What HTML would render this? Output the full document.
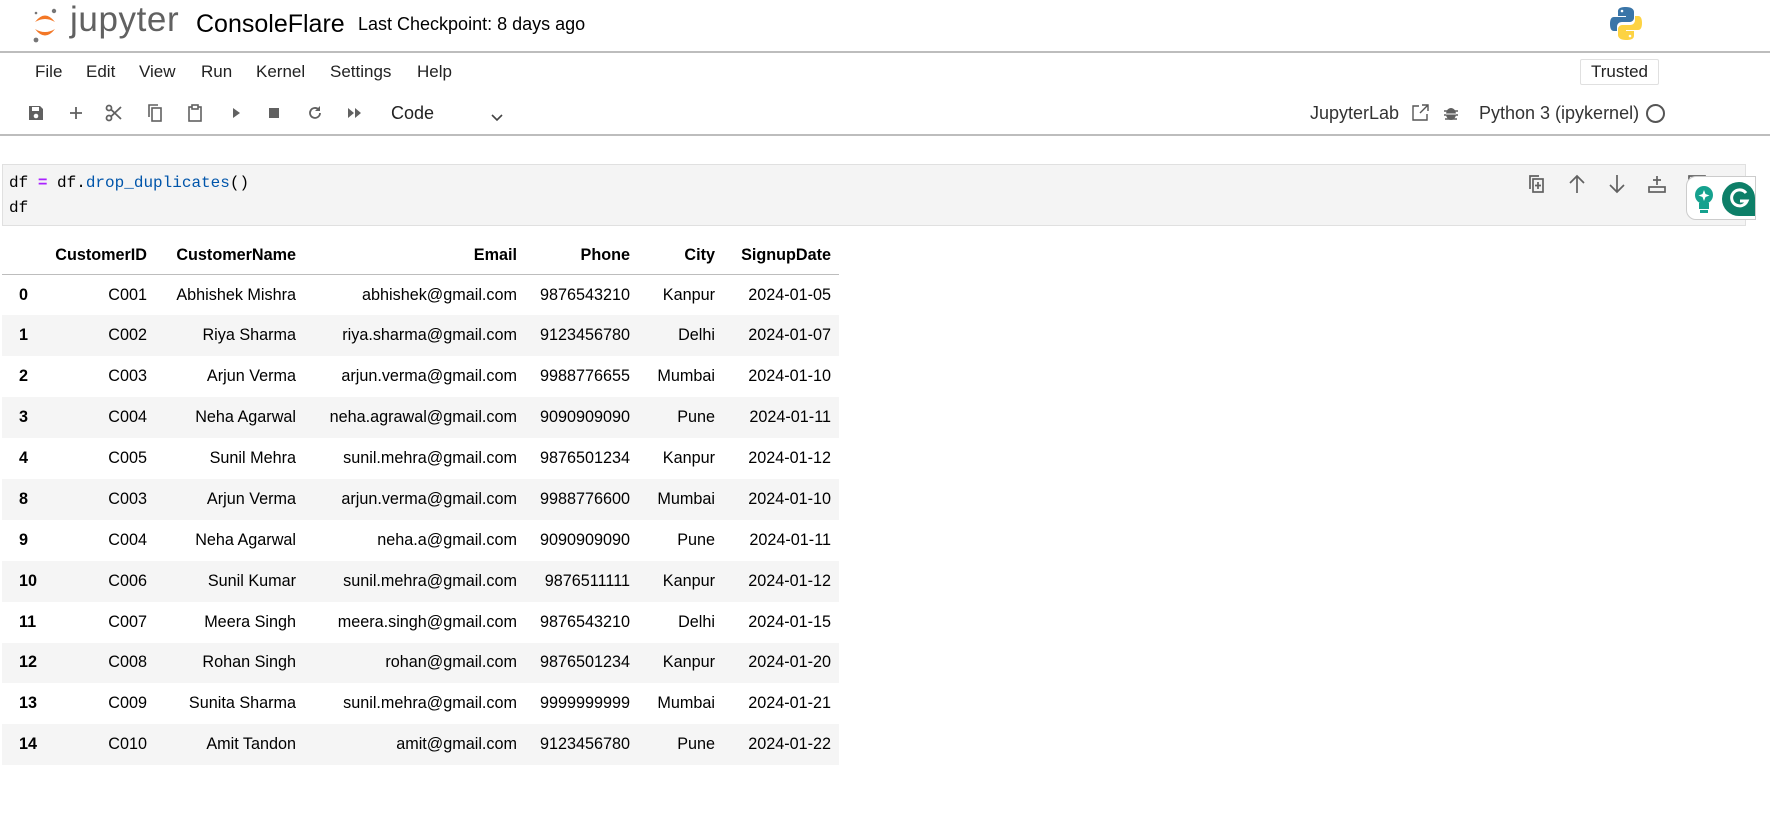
<!DOCTYPE html>
<html><head><meta charset="utf-8"><style>
*{margin:0;padding:0;box-sizing:border-box}
body{width:1770px;height:826px;background:#fff;font-family:"Liberation Sans",sans-serif;color:#000;position:relative;overflow:hidden}
.abs{position:absolute}
.menu span{position:absolute;top:62px;font-size:17px;color:#222}
.tb{position:absolute;top:103px;width:20px;height:20px}
table{position:absolute;left:2px;top:236px;border-collapse:collapse;table-layout:fixed;font-size:16.2px;width:837px}
td,th{height:40.9px;text-align:right;padding-right:8px;white-space:nowrap;overflow:hidden}
th{font-weight:bold}
thead th{height:38.5px;border-bottom:1.5px solid #bdbdbd}
tbody tr:nth-child(even){background:#f5f5f5}
tbody th{text-align:left;padding-left:17px}
</style></head><body>
<!-- header -->
<svg class="abs" style="left:32px;top:6px" width="26" height="38" viewBox="0 0 26 38">
<path d="M3 16 Q13 3 23 16 Q13 10 3 16Z" fill="#f37726"/>
<path d="M3 23 Q13 36 23 23 Q13 29 3 23Z" fill="#f37726"/>
<circle cx="22" cy="5" r="2.2" fill="#767677"/><circle cx="4" cy="34" r="2.4" fill="#767677"/><circle cx="4" cy="7" r="1.3" fill="#767677"/>
</svg>
<div class="abs" style="left:70px;top:0px;font-size:35px;color:#616161;letter-spacing:0.6px">jupyter</div>
<div class="abs" style="left:196px;top:10px;font-size:25px">ConsoleFlare</div>
<div class="abs" style="left:358px;top:14px;font-size:18px">Last Checkpoint: 8 days ago</div>
<svg class="abs" style="left:1609px;top:6px" width="34" height="35" viewBox="0 0 34 35">
<path d="M17 1C9 1 9 4 9 6v4h8v1H5C2 11 1 14 1 18s1 7 4 7h3v-4c0-3 2-5 5-5h8c2 0 4-2 4-4V6c0-3-3-5-8-5z" fill="#3a75a8"/>
<path d="M17 34c8 0 8-3 8-5v-4h-8v-1h12c3 0 4-3 4-7s-1-7-4-7h-3v4c0 3-2 5-5 5h-8c-2 0-4 2-4 4v6c0 3 3 5 8 5z" fill="#fdd343"/>
<circle cx="13" cy="5" r="1.3" fill="#fff"/><circle cx="21" cy="30" r="1.3" fill="#fff"/>
</svg>
<div class="abs" style="left:0;top:51px;width:1770px;height:1.5px;background:#bdbdbd"></div>
<div class="menu"><span style="left:35px">File</span><span style="left:86px">Edit</span><span style="left:139px">View</span><span style="left:201px">Run</span><span style="left:256px">Kernel</span><span style="left:330px">Settings</span><span style="left:417px">Help</span></div>
<div class="abs" style="left:1580px;top:59px;width:79px;height:26px;border:1px solid #e0e0e0;border-radius:2px;font-size:17px;text-align:center;line-height:24px;color:#222">Trusted</div>
<!-- toolbar -->
<svg class="tb" style="left:26px" viewBox="0 0 20 20"><path d="M3 3h11l3 3v11H3z" fill="#616161"/><rect x="6" y="4" width="7" height="4" fill="#fff"/><circle cx="10" cy="13" r="2.3" fill="#fff"/></svg>
<svg class="tb" style="left:66px" viewBox="0 0 20 20"><path d="M10 4v12M4 10h12" stroke="#616161" stroke-width="1.8"/></svg>
<svg class="tb" style="left:104px" viewBox="0 0 20 20"><g stroke="#616161" stroke-width="1.8" fill="none"><circle cx="5" cy="5" r="2.5"/><circle cx="5" cy="15" r="2.5"/><path d="M7 6.5L17 16M7 13.5L17 4"/></g></svg>
<svg class="tb" style="left:145px" viewBox="0 0 20 20"><g stroke="#616161" stroke-width="1.6" fill="none"><path d="M4 14V2h9"/><rect x="7" y="5" width="9" height="13"/></g></svg>
<svg class="tb" style="left:185px" viewBox="0 0 20 20"><g stroke="#616161" stroke-width="1.6" fill="none"><rect x="4" y="4" width="12" height="14"/><rect x="7" y="2" width="6" height="4" fill="#fff"/></g></svg>
<svg class="tb" style="left:226px" viewBox="0 0 20 20"><path d="M7 5l7 5-7 5z" fill="#616161"/></svg>
<svg class="tb" style="left:264px" viewBox="0 0 20 20"><rect x="5" y="5" width="10" height="10" fill="#616161"/></svg>
<svg class="tb" style="left:305px" viewBox="0 0 20 20"><path d="M15 10a5 5 0 1 1-1.5-3.6" stroke="#616161" stroke-width="1.8" fill="none"/><path d="M15 3v5h-5z" fill="#616161"/></svg>
<svg class="tb" style="left:345px" viewBox="0 0 20 20"><path d="M3 5l6 5-6 5zM10 5l6 5-6 5z" fill="#616161"/></svg>
<div class="abs" style="left:391px;top:103px;font-size:18px;color:#222">Code</div>
<svg class="abs" style="left:490px;top:112px" width="14" height="10" viewBox="0 0 14 10"><path d="M2 3l5 5 5-5" stroke="#444" stroke-width="1.6" fill="none"/></svg>
<div class="abs" style="left:1310px;top:103px;font-size:18px;color:#333">JupyterLab</div>
<svg class="abs" style="left:1411px;top:103px" width="19" height="19" viewBox="0 0 19 19"><g stroke="#555" stroke-width="1.4" fill="none"><path d="M8 3H2v14h14v-6"/><path d="M11 2h6v6M17 2l-8 8"/></g></svg>
<svg class="abs" style="left:1443px;top:105px" width="16" height="16" viewBox="0 0 16 16"><ellipse cx="8" cy="9" rx="5" ry="6" fill="#616161"/><path d="M1 6h14M1 10h14M2 14h12" stroke="#616161" stroke-width="1.5"/><path d="M3 9h10" stroke="#fff" stroke-width="1"/></svg>
<div class="abs" style="left:1479px;top:103px;font-size:18px;color:#333">Python 3 (ipykernel)</div>
<div class="abs" style="left:1646px;top:104px;width:19px;height:19px;border:2px solid #555;border-radius:50%"></div>
<div class="abs" style="left:0;top:134px;width:1770px;height:1.5px;background:#bdbdbd"></div>
<!-- cell -->
<div class="abs" style="left:2px;top:164px;width:1744px;height:62px;background:#f4f4f4;border:1px solid #e0e0e0"></div>
<div class="abs" style="left:9px;top:171px;font-family:'Liberation Mono',monospace;font-size:16px;line-height:25px;color:#000">df <b style="color:#aa22ff">=</b> df.<span style="color:#0055aa">drop_duplicates</span>()<br>df</div>
<svg class="abs" style="left:1527px;top:173px;width:220px;height:22px" viewBox="0 0 220 22">
<g stroke="#616161" stroke-width="1.7" fill="none">
<path d="M3 16V3h9"/><rect x="6" y="6" width="10" height="13"/><path d="M11 9v7M8 12.5h6"/>
<path d="M50 20V3M43 10l7-7 7 7"/>
<path d="M90 2v17M83 12l7 7 7-7"/>
<path d="M130 3v9M126 7h8"/><rect x="122" y="14" width="16" height="5"/>
<rect x="162" y="3" width="16" height="5"/><path d="M170 11v9M166 15h8"/>
</g>
<path d="M202 4h14v3h-14zM203 8h12v13h-12z" fill="#616161"/>
</svg>
<div class="abs" style="left:1686px;top:176px;width:70px;height:44px;background:#fff;border:1px solid #ccc;border-radius:10px 0 0 10px"></div>
<svg class="abs" style="left:1693px;top:185px" width="22" height="30" viewBox="0 0 22 30"><circle cx="11" cy="10" r="9" fill="#15a18e"/><rect x="6" y="18" width="10" height="6" fill="#15a18e"/><rect x="7" y="25" width="8" height="3" fill="#15a18e"/><path d="M11 5l1.5 4 4 1.5-4 1.5-1.5 4-1.5-4-4-1.5 4-1.5z" fill="#fff"/></svg>
<svg class="abs" style="left:1722px;top:181px" width="34" height="36" viewBox="0 0 34 36"><path d="M17 1a16 16 0 0 1 16 16v18H17A16 16 0 0 1 17 1z" fill="#0d7f68"/><path d="M24 12a8 8 0 1 0 1 8h-7" stroke="#fff" stroke-width="3" fill="none"/></svg>
<!-- table -->
<table>
<colgroup><col style="width:38px"><col style="width:115px"><col style="width:149px"><col style="width:221px"><col style="width:113px"><col style="width:85px"><col style="width:116px"></colgroup>
<thead><tr><th></th><th>CustomerID</th><th>CustomerName</th><th>Email</th><th>Phone</th><th>City</th><th>SignupDate</th></tr></thead>
<tbody>
<tr><th>0</th><td>C001</td><td>Abhishek Mishra</td><td>abhishek@gmail.com</td><td>9876543210</td><td>Kanpur</td><td>2024-01-05</td></tr>
<tr><th>1</th><td>C002</td><td>Riya Sharma</td><td>riya.sharma@gmail.com</td><td>9123456780</td><td>Delhi</td><td>2024-01-07</td></tr>
<tr><th>2</th><td>C003</td><td>Arjun Verma</td><td>arjun.verma@gmail.com</td><td>9988776655</td><td>Mumbai</td><td>2024-01-10</td></tr>
<tr><th>3</th><td>C004</td><td>Neha Agarwal</td><td>neha.agrawal@gmail.com</td><td>9090909090</td><td>Pune</td><td>2024-01-11</td></tr>
<tr><th>4</th><td>C005</td><td>Sunil Mehra</td><td>sunil.mehra@gmail.com</td><td>9876501234</td><td>Kanpur</td><td>2024-01-12</td></tr>
<tr><th>8</th><td>C003</td><td>Arjun Verma</td><td>arjun.verma@gmail.com</td><td>9988776600</td><td>Mumbai</td><td>2024-01-10</td></tr>
<tr><th>9</th><td>C004</td><td>Neha Agarwal</td><td>neha.a@gmail.com</td><td>9090909090</td><td>Pune</td><td>2024-01-11</td></tr>
<tr><th>10</th><td>C006</td><td>Sunil Kumar</td><td>sunil.mehra@gmail.com</td><td>9876511111</td><td>Kanpur</td><td>2024-01-12</td></tr>
<tr><th>11</th><td>C007</td><td>Meera Singh</td><td>meera.singh@gmail.com</td><td>9876543210</td><td>Delhi</td><td>2024-01-15</td></tr>
<tr><th>12</th><td>C008</td><td>Rohan Singh</td><td>rohan@gmail.com</td><td>9876501234</td><td>Kanpur</td><td>2024-01-20</td></tr>
<tr><th>13</th><td>C009</td><td>Sunita Sharma</td><td>sunil.mehra@gmail.com</td><td>9999999999</td><td>Mumbai</td><td>2024-01-21</td></tr>
<tr><th>14</th><td>C010</td><td>Amit Tandon</td><td>amit@gmail.com</td><td>9123456780</td><td>Pune</td><td>2024-01-22</td></tr>
</tbody></table>
</body></html>
